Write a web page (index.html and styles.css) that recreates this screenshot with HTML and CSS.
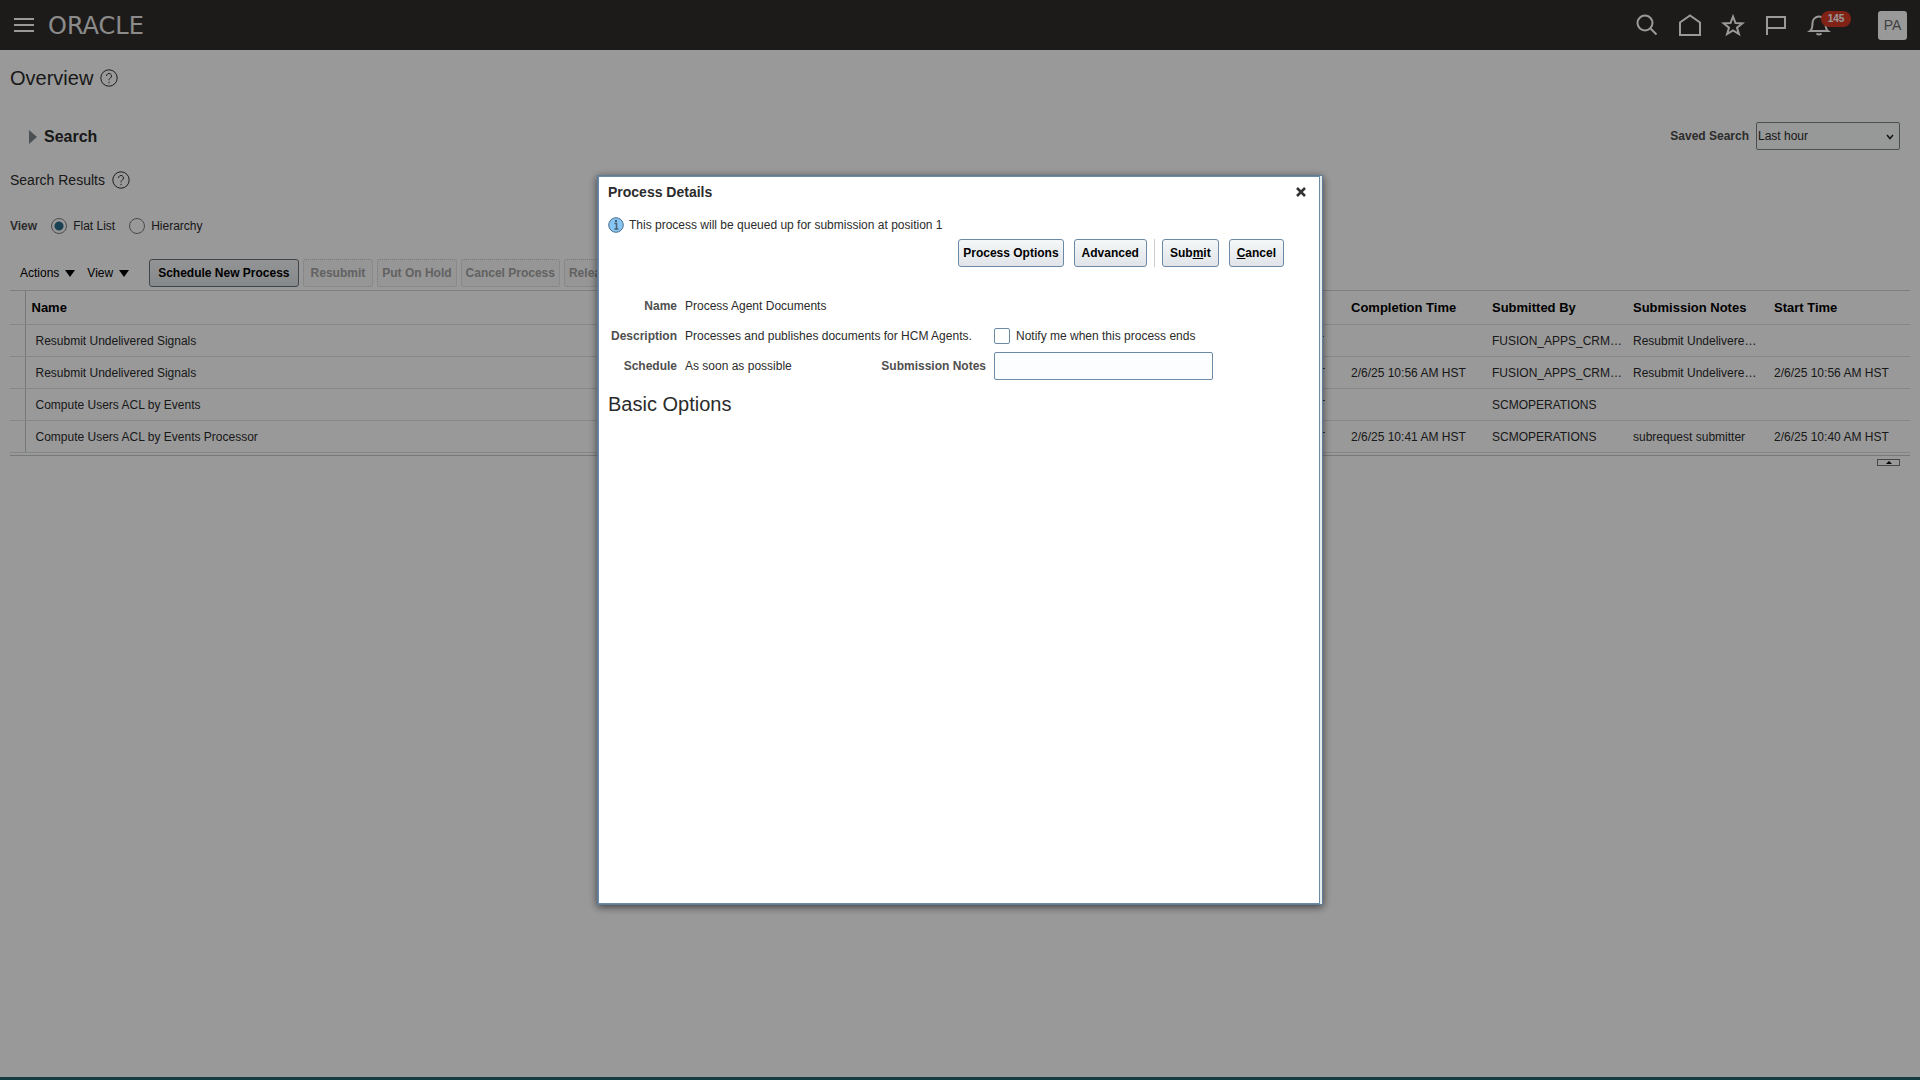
FILE: index.html
```html
<!DOCTYPE html>
<html lang="en">
<head>
  <meta charset="UTF-8" />
  <meta name="viewport" content="width=device-width, initial-scale=1.0">
  <title>Overview - Scheduled Processes</title>
  <link rel="stylesheet" href="styles.css">
</head>
<body>
  <header class="topbar">
    <button class="icon-btn menu-btn" type="button" aria-label="Navigator">
      <svg width="20" height="14" viewBox="0 0 20 14"><path d="M0 1h20M0 7h20M0 13h20" /></svg>
    </button>
    <a class="logo" href="#">ORACLE</a>
    <nav class="topbar-icons">
      <button class="icon-btn" type="button" aria-label="Search">
        <svg width="24" height="24" viewBox="0 0 24 24"><circle cx="10" cy="10" r="7.5" /><path d="M15.500 15.500l6 6" /></svg>
      </button>
      <button class="icon-btn" type="button" aria-label="Home">
        <svg width="24" height="24" viewBox="0 0 24 24"><path d="M2 22V9.500L12 2.500l10 7V22z" /></svg>
      </button>
      <button class="icon-btn" type="button" aria-label="Favorites">
        <svg width="24" height="24" viewBox="0 0 24 24"><path d="M12 3.500l2.500 6.500 7 .3-5.500 4.300 1.900 6.500-5.900-3.700-5.900 3.700L8 14.600 2.500 10.300l7-.3z" /></svg>
      </button>
      <button class="icon-btn" type="button" aria-label="Watchlist">
        <svg width="24" height="24" viewBox="0 0 24 24"><path d="M3 22V4h18v11H3" /></svg>
      </button>
      <button class="icon-btn bell-btn" type="button" aria-label="Notifications">
        <svg width="24" height="24" viewBox="0 0 24 24"><path d="M3 18c2-1.500 2.500-3.500 2.500-8a6.500 6.500 0 0 1 13 0c0 4.500.5 6.500 2.500 8z" /><path d="M9.500 20.500q2.500 2 5 0" /></svg>
        <span class="badge">145</span>
      </button>
      <button class="avatar" type="button">PA</button>
    </nav>
  </header>

  <main class="page">
    <h1 class="page-title">Overview
      <svg class="help" width="18" height="18" viewBox="0 0 18 18"><circle cx="9" cy="9" r="8.200" /><path d="M6.500 7a2.500 2.500 0 1 1 3.800 2.100C9.300 9.700 9 10 9 11.300M9 12.800v1.400" /></svg>
    </h1>

    <div class="search-bar">
      <button class="disclosure" type="button"><span class="arrow-right"></span>Search</button>
      <div class="saved-search">
        <label for="savedSearch">Saved Search</label>
        <div class="select-box">
          <select id="savedSearch"><option>Last hour</option></select>
          <svg class="chevron" width="8" height="6" viewBox="0 0 8 6"><path d="M1 1l3 3.500L7 1" /></svg>
        </div>
      </div>
    </div>

    <h2 class="results-title">Search Results
      <svg class="help" width="18" height="18" viewBox="0 0 18 18"><circle cx="9" cy="9" r="8.200" /><path d="M6.500 7a2.500 2.500 0 1 1 3.800 2.100C9.300 9.700 9 10 9 11.300M9 12.800v1.400" /></svg>
    </h2>

    <div class="view-row">
      <span class="view-label">View</span>
      <label><input type="radio" name="view" checked>Flat List</label>
      <label><input type="radio" name="view">Hierarchy</label>
    </div>

    <div class="toolbar">
      <button class="menu" type="button">Actions<span class="arrow-down"></span></button>
      <button class="menu" type="button">View<span class="arrow-down"></span></button>
      <div class="toolbar-buttons">
        <button class="btn btn-wide" type="button">Schedule New Process</button>
        <button class="btn" type="button" disabled>Resubmit</button>
        <button class="btn btn-compact" type="button" disabled>Put On Hold</button>
        <button class="btn btn-compact" type="button" disabled>Cancel Process</button>
        <button class="btn btn-compact" type="button" disabled>Release Process</button>
      </div>
    </div>

    <div class="table-wrap">
      <table class="processes">
        <colgroup>
          <col class="col-select">
          <col>
          <col class="col-data">
          <col class="col-data">
          <col class="col-data">
          <col class="col-data">
          <col class="col-last">
        </colgroup>
        <thead>
          <tr><th></th><th>Name</th><th>Scheduled Time</th><th>Completion Time</th><th>Submitted By</th><th>Submission Notes</th><th>Start Time</th></tr>
        </thead>
        <tbody>
          <tr><td></td><td>Resubmit Undelivered Signals</td><td>2/6/25 11:56 AM HST</td><td></td><td>FUSION_APPS_CRM…</td><td>Resubmit Undelivere…</td><td></td></tr>
          <tr><td></td><td>Resubmit Undelivered Signals</td><td>2/6/25 10:56 AM HST</td><td>2/6/25 10:56 AM HST</td><td>FUSION_APPS_CRM…</td><td>Resubmit Undelivere…</td><td>2/6/25 10:56 AM HST</td></tr>
          <tr><td></td><td>Compute Users ACL by Events</td><td>2/6/25 10:50 AM HST</td><td></td><td>SCMOPERATIONS</td><td></td><td></td></tr>
          <tr><td></td><td>Compute Users ACL by Events Processor</td><td>2/6/25 10:40 AM HST</td><td>2/6/25 10:41 AM HST</td><td>SCMOPERATIONS</td><td>subrequest submitter</td><td>2/6/25 10:40 AM HST</td></tr>
        </tbody>
      </table>
    </div>
    <div class="splitter">
      <button class="collapse" type="button" aria-label="Collapse pane"><span class="arrow-up"></span></button>
    </div>
  </main>
  <footer class="page-footer"></footer>

  <div class="overlay">
    <div class="dialog" role="dialog" aria-labelledby="dialogTitle">
      <div class="dialog-content">
        <div class="dialog-header">
          <h2 id="dialogTitle">Process Details</h2>
          <button class="close" type="button" aria-label="Close">
            <svg width="10" height="10" viewBox="0 0 10 10"><path d="M1 1l8 8M9 1l-8 8" /></svg>
          </button>
        </div>
        <p class="info">
          <svg width="16" height="16" viewBox="0 0 16 16">
            <circle cx="8" cy="8" r="7.300" fill="#86c5f4" stroke="#4d6f8c" />
            <path d="M6.500 6.500h2V12M6.500 12h4" fill="none" stroke="#4d5f70" stroke-width="1.500" />
            <circle cx="8" cy="4" r="1.200" fill="#4d5f70" />
          </svg>
          This process will be queued up for submission at position 1
        </p>
        <div class="dialog-actions">
          <button class="btn btn-compact" type="button">Process Options</button>
          <button class="btn" type="button">Advanced</button>
          <span class="divider"></span>
          <button class="btn" type="button">Sub<u>m</u>it</button>
          <button class="btn" type="button"><u>C</u>ancel</button>
        </div>
        <form class="details">
          <span class="label">Name</span><span class="value value-wide">Process Agent Documents</span>
          <span class="label">Description</span><span class="value value-desc">Processes and publishes documents for HCM Agents.</span>
          <label class="notify"><input type="checkbox">Notify me when this process ends</label>
          <span class="label">Schedule</span><span class="value">As soon as possible</span>
          <label class="label" for="notes">Submission Notes</label><input class="notes" id="notes" type="text">
        </form>
        <h3 class="section-title">Basic Options</h3>
      </div>
    </div>
  </div>
</body>
</html>
```
FILE: styles.css
```css
* {
  box-sizing: border-box;
}
body {
  margin: 0;
  min-height: 100vh;
  display: flex;
  flex-direction: column;
  font-family: "Liberation Sans", Arial, sans-serif;
  font-size: 12px;
  line-height: 16px;
  color: #2b2b2b;
  background-color: #fff;
}
button,
input,
select {
  font: inherit;
  color: inherit;
}
button {
  padding: 0;
  border: none;
  background: none;
  white-space: nowrap;
}
h1,
h2,
h3,
p {
  margin: 0;
}

/* top bar */
.topbar {
  display: flex;
  align-items: center;
  height: 50px;
  padding: 0 13px 0 14px;
  background-color: #312d2a;
}
.icon-btn {
  display: flex;
  position: relative;
}
.icon-btn svg {
  fill: none;
  stroke: #fff;
  stroke-width: 2;
}
.logo {
  margin-left: 14px;
  padding-top: 2px;
  font-family: "DejaVu Sans", sans-serif;
  font-size: 24px;
  color: #e8e8e8;
  text-decoration: none;
}
.topbar-icons {
  display: flex;
  align-items: center;
  gap: 19px;
  margin-left: auto;
}
.bell-btn {
  margin-right: 28px;
}
.badge {
  position: absolute;
  left: 14px;
  top: -2px;
  width: 30px;
  border-radius: 8px;
  background-color: #d63b25;
  font-size: 10px;
  font-weight: bold;
  text-align: center;
  color: #fff;
}
.avatar {
  width: 29px;
  height: 29px;
  border-radius: 3px;
  background-color: #fff;
  font-size: 14px;
  color: #6b6b6b;
}

/* page */
.page {
  flex: 1;
  padding: 16px 10px 0;
}
.help {
  margin-left: 7px;
  fill: none;
  stroke: #333;
}
.page-title {
  display: flex;
  align-items: center;
  font-size: 20px;
  line-height: 24px;
  font-weight: normal;
}
.search-bar {
  display: flex;
  align-items: center;
  justify-content: space-between;
  margin-top: 32px;
  padding: 0 10px 0 19px;
}
.disclosure {
  display: flex;
  align-items: center;
  gap: 7px;
  padding-top: 2px;
  font-size: 16px;
  font-weight: bold;
}
.arrow-right {
  border: 7px solid transparent;
  border-left: 8px solid #7d868c;
  border-right: none;
}
.saved-search {
  display: flex;
  align-items: center;
  gap: 7px;
}
.saved-search label,
.view-label {
  font-weight: bold;
  color: #4a4a4a;
}
.select-box {
  position: relative;
}
.saved-search select {
  display: block;
  appearance: none;
  width: 144px;
  height: 28px;
  padding: 0 1px;
  border: 1px solid #7b8388;
  border-radius: 2px;
  background-color: #fcfdfe;
}
.chevron {
  position: absolute;
  right: 6px;
  top: 12px;
  fill: none;
  stroke: #222;
  stroke-width: 1.5;
  pointer-events: none;
}
.results-title {
  display: flex;
  align-items: center;
  margin-top: 20px;
  font-size: 14px;
  line-height: 20px;
  font-weight: normal;
}
.view-row {
  display: flex;
  align-items: center;
  gap: 14px;
  margin-top: 28px;
}
.view-row label {
  display: flex;
  align-items: center;
  gap: 6px;
}
.view-row input {
  appearance: none;
  width: 16px;
  height: 16px;
  margin: 0;
  border: 1px solid #7d7d7d;
  border-radius: 50%;
}
.view-row input:checked {
  background: radial-gradient(#2c6c8c 4px, #fff 5px);
}

/* toolbar */
.toolbar {
  display: flex;
  align-items: center;
  gap: 12px;
  margin-top: 25px;
  padding-left: 10px;
}
.menu {
  display: flex;
  align-items: center;
  gap: 6px;
  color: #000;
}
.arrow-down {
  border: 5px solid transparent;
  border-top: 7px solid #000;
  border-bottom: none;
}
.toolbar-buttons {
  display: flex;
  gap: 4px;
  margin-left: 8px;
}
.btn {
  height: 28px;
  padding: 0 7px;
  border: 1px solid #6b8aa8;
  border-radius: 3px;
  background: linear-gradient(#f5f7f8, #e0e4e8);
  font-weight: bold;
  color: #000;
}
.btn-compact {
  padding: 0 4px;
}
.btn-wide {
  padding: 0 8px;
}
.toolbar .btn {
  border-color: #6c737a;
}
.toolbar .btn:disabled {
  border: 1px dotted #c8cdd1;
  background: #fafafa;
  color: #a3a3a3;
}

/* table */
.table-wrap {
  margin-top: 3px;
  padding-bottom: 2px;
  border-top: 1px solid #d0d3d5;
  border-bottom: 1px solid #c4c8ca;
}
.processes {
  width: 100%;
  table-layout: fixed;
  border-collapse: collapse;
}
.col-select {
  width: 15px;
}
.col-data {
  width: 141px;
}
.col-last {
  width: 142px;
}
.processes th,
.processes td {
  height: 32px;
  padding: 1px 2px 0 6px;
  border-bottom: 1px solid #dcdfe1;
  text-align: left;
  white-space: nowrap;
}
.processes th {
  height: 33px;
  font-size: 13px;
  color: #000;
}
.processes td:nth-child(2) {
  padding-left: 10px;
}
.processes th:first-child,
.processes td:first-child {
  border-right: 1px solid #c4c8ca;
}
.splitter {
  display: flex;
  justify-content: flex-end;
  padding: 3px 10px 0 0;
}
.collapse {
  display: flex;
  justify-content: center;
  align-items: center;
  width: 23px;
  height: 7px;
  border: 1px solid #777;
}
.arrow-up {
  border: 3px solid transparent;
  border-bottom-color: #000;
  border-top: none;
}
.page-footer {
  height: 3px;
  background-color: #22636e;
}

/* process details dialog */
.overlay {
  position: fixed;
  inset: 0;
  display: flex;
  justify-content: center;
  align-items: center;
  background-color: rgba(0, 0, 0, 0.4);
}
.dialog {
  width: 726px;
  height: 730px;
  padding-right: 2px;
  border: 1px solid #5f7d9b;
  background-color: #e4e9ec;
  box-shadow: 0 2px 8px rgba(0, 0, 0, 0.6);
}
.dialog-content {
  height: 100%;
  padding: 7px 9px;
  border: 1px solid #6b8aa8;
  background-color: #fff;
}
.dialog-header {
  display: flex;
  align-items: center;
  justify-content: space-between;
  padding-right: 4px;
}
.dialog-header h2 {
  font-size: 14px;
  line-height: 16px;
}
.close svg {
  display: block;
  stroke: #333;
  stroke-width: 2.5;
}
.info {
  display: flex;
  align-items: center;
  gap: 5px;
  margin-top: 17px;
}
.dialog-actions {
  display: flex;
  justify-content: flex-end;
  gap: 10px;
  margin-top: 6px;
  padding-right: 26px;
}
.divider {
  width: 1px;
  margin: 0 -3px;
  background-color: #c9ced2;
}
.details {
  display: grid;
  grid-template-columns: 69px 1fr auto 219px;
  grid-auto-rows: 28px;
  gap: 2px 8px;
  align-items: center;
  margin-top: 25px;
  padding-right: 97px;
}
.label {
  font-weight: bold;
  text-align: right;
  color: #4f4f4f;
}
.value-wide {
  grid-column: 2 / 5;
}
.value-desc {
  grid-column: 2 / 4;
}
.notify {
  grid-column: 4;
  display: flex;
  align-items: center;
  gap: 6px;
}
.notify input {
  appearance: none;
  width: 16px;
  height: 16px;
  margin: 0;
  border: 1px solid #6b8aa8;
  border-radius: 2px;
}
.notes {
  width: 100%;
  height: 28px;
  border: 1px solid #6b8aa8;
  border-radius: 2px;
  background-color: #fcfdfe;
}
.section-title {
  margin-top: 12px;
  font-size: 20px;
  line-height: 24px;
  font-weight: normal;
}
```
